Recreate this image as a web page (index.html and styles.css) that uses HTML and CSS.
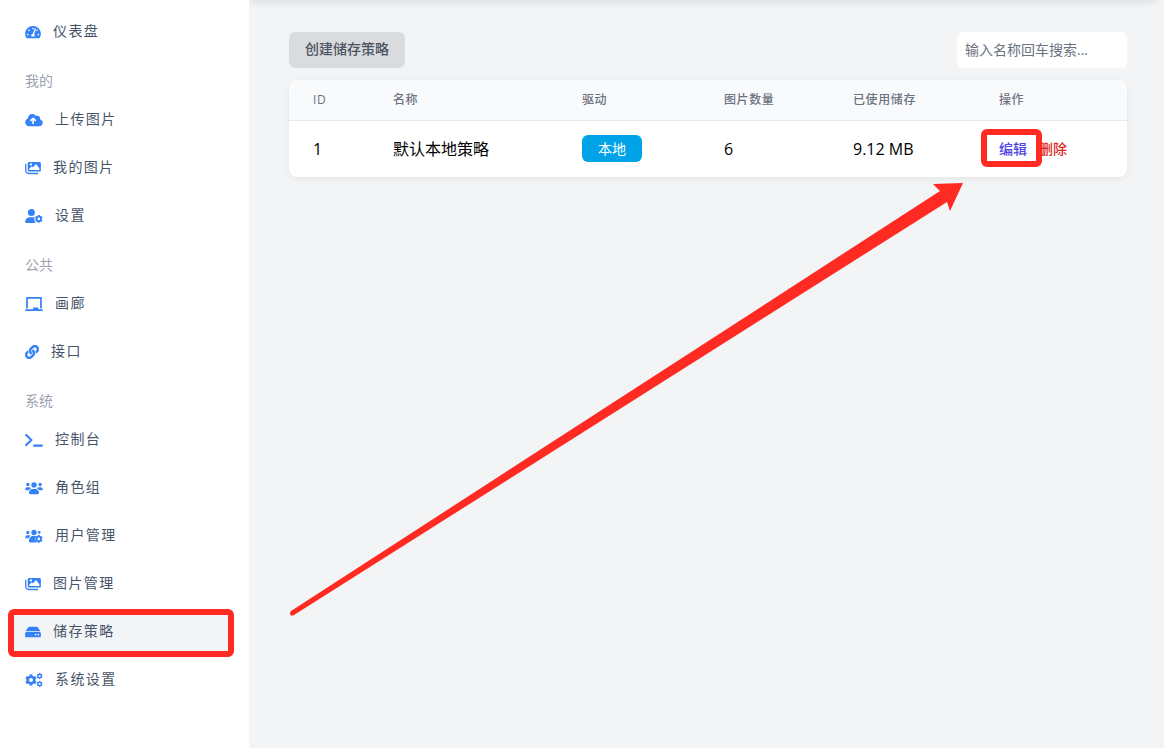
FILE: index.html
```html
<!DOCTYPE html>
<html lang="zh-CN">
<head>
  <meta charset="UTF-8">
  <meta name="viewport" content="width=device-width, initial-scale=1">
  <title>储存策略</title>
  <link rel="stylesheet" href="styles.css">
</head>
<body>
  <svg class="sprite" aria-hidden="true">
    <symbol id="i-gauge" viewBox="0 0 576 512"><path d="M288 32C128.94 32 0 160.94 0 320c0 52.8 14.25 102.26 39.06 144.8 5.61 9.62 16.3 15.2 27.44 15.2h443c11.14 0 21.83-5.58 27.44-15.2C561.75 422.26 576 372.8 576 320c0-159.06-128.94-288-288-288zm0 64c14.71 0 26.58 10.13 30.32 23.65-1.11 2.26-2.64 4.23-3.45 6.67l-9.22 27.67c-5.13 3.49-10.97 6.01-17.64 6.01-17.67 0-32-14.33-32-32S270.33 96 288 96zM96 384c-17.67 0-32-14.33-32-32s14.33-32 32-32 32 14.33 32 32-14.33 32-32 32zm48-160c-17.67 0-32-14.33-32-32s14.33-32 32-32 32 14.33 32 32-14.33 32-32 32zm246.77-72.41l-61.33 184C343.13 347.33 352 364.54 352 384c0 11.72-3.38 22.55-8.88 32H232.88c-5.5-9.45-8.88-20.28-8.88-32 0-33.94 26.5-61.43 59.9-63.59l61.34-184.01c4.17-12.56 17.73-19.45 30.36-15.17 12.57 4.19 19.35 17.79 15.17 30.36zm14.66 57.2l15.52-46.55c3.47-1.29 7.13-2.23 11.05-2.23 17.67 0 32 14.33 32 32s-14.33 32-32 32c-11.38-.01-20.89-6.28-26.57-15.22zM480 384c-17.67 0-32-14.33-32-32s14.33-32 32-32 32 14.33 32 32-14.33 32-32 32z"/></symbol>
    <symbol id="i-cloud" viewBox="0 0 640 512">
      <path d="M537.6 226.6c4.1-10.7 6.4-22.4 6.4-34.6 0-53-43-96-96-96-19.7 0-38.1 6-53.3 16.2C367 64.2 315.3 32 256 32c-88.4 0-160 71.6-160 160 0 2.7.1 5.4.2 8.1C40.2 219.8 0 273.2 0 336c0 79.5 64.5 144 144 144h368c70.7 0 128-57.3 128-128 0-61.9-44-113.6-102.4-125.4z"/>
      <path d="M288 384V208M208 272l80-80 80 80" fill="none" stroke="#fff" stroke-width="60" stroke-linecap="round" stroke-linejoin="round"/>
    </symbol>
    <symbol id="i-images" viewBox="0 0 576 512">
      <path fill-rule="evenodd" d="M528 32H144c-26.500 0-48 21.500-48 48v256c0 26.500 21.500 48 48 48H528c26.500 0 48-21.500 48-48v-256C576 53.500 554.500 32 528 32zM212 82a42 42 0 1 0 0 84 42 42 0 0 0 0-84zM520 325H152v-44l90-90 50 50 100-130 128 150z"/>
      <path d="M456 432H120c-39.700 0-72-32.300-72-72v-240C48 106.800 37.250 96 24 96S0 106.800 0 120v240C0 426.200 53.830 480 120 480h336c13.250 0 24-10.750 24-24S469.300 432 456 432z"/>
    </symbol>
    <symbol id="i-gear" viewBox="-8 -8 16 16"><g fill="none" stroke="currentColor"><circle r="4.500" stroke-width="3.600"/><path stroke-width="4" d="M0-5v-3M0 5v3M4.300 2.500l2.600 1.500M4.300-2.500l2.600-1.500M-4.300 2.500l-2.600 1.500M-4.300-2.500l-2.600-1.500"/></g></symbol>
    <symbol id="i-user-gear" viewBox="0 0 640 512">
      <circle cx="224" cy="128" r="128"/>
      <path d="M174 304h100c28 0 52 6 76 18-34 62-22 138 34 190H32c-18 0-32-14-32-32C0 380 78 304 174 304z"/>
      <use href="#i-gear" x="352" y="214" width="288" height="298"/>
    </symbol>
    <symbol id="i-board" viewBox="0 0 640 512"><path d="M96 64h448v352h64V40c0-22-18-40-40-40H72C50 0 32 18 32 40v376h64V64zM624 448H480v-64H288v64H16c-9 0-16 7-16 16v32c0 9 7 16 16 16h608c9 0 16-7 16-16v-32c0-9-7-16-16-16z"/></symbol>
    <symbol id="i-link" viewBox="0 0 512 512"><path d="M326.612 185.391c59.747 59.809 58.927 155.698.36 214.590-.11.12-.24.25-.36.37l-67.200 67.200c-59.270 59.270-155.699 59.262-214.960 0-59.270-59.260-59.270-155.700 0-214.960l37.106-37.106c9.840-9.840 26.786-3.300 27.294 10.606.648 17.722 3.826 35.527 9.690 52.721 1.986 5.822.567 12.262-3.783 16.612l-13.087 13.087c-28.026 28.026-28.905 73.660-1.155 101.960 28.024 28.579 74.086 28.749 102.325.51l67.200-67.190c28.191-28.191 28.073-73.757 0-101.830-3.701-3.694-7.429-6.564-10.341-8.569a16.037 16.037 0 0 1-6.947-12.606c-.396-10.567 3.348-21.456 11.698-29.806l21.054-21.055c5.521-5.521 14.182-6.199 20.584-1.731a152.482 152.482 0 0 1 20.522 17.197zM467.547 44.449c-59.261-59.262-155.690-59.270-214.960 0l-67.200 67.200c-.12.12-.25.25-.36.37-58.566 58.892-59.387 154.781.36 214.590a152.454 152.454 0 0 0 20.521 17.196c6.402 4.468 15.064 3.789 20.584-1.731l21.054-21.055c8.350-8.350 12.094-19.239 11.698-29.806a16.037 16.037 0 0 0-6.947-12.606c-2.912-2.005-6.640-4.875-10.341-8.569-28.073-28.073-28.191-73.639 0-101.830l67.200-67.190c28.239-28.239 74.300-28.069 102.325.51 27.750 28.300 26.872 73.934-1.155 101.960l-13.087 13.087c-4.350 4.350-5.769 10.790-3.783 16.612 5.864 17.194 9.042 34.999 9.690 52.721.509 13.906 17.454 20.446 27.294 10.606l37.106-37.106c59.271-59.259 59.271-155.699.001-214.959z" stroke="currentColor" stroke-width="14"/></symbol>
    <symbol id="i-terminal" viewBox="0 0 640 512"><path d="M34 72l190 184L34 440M320 464h286" fill="none" stroke="currentColor" stroke-width="80" stroke-linecap="round" stroke-linejoin="round"/></symbol>
    <symbol id="i-users" viewBox="0 0 640 512">
      <circle cx="320" cy="144" r="98"/><circle cx="96" cy="128" r="62"/><circle cx="544" cy="128" r="62"/>
      <path d="M270 288h100c72 0 134 62 134 140 0 30-16 52-42 52H178c-26 0-42-22-42-52 0-78 62-140 134-140zM68 224h70c24 0 44 10 58 24 2 8 8 16 14 24-40 12-68 36-86 64H22c-12 0-22-10-22-24 0-52 32-88 68-88zM572 224h-70c-24 0-44 10-58 24-2 8-8 16-14 24 40 12 68 36 86 64h102c12 0 22-10 22-24 0-52-32-88-68-88z"/>
    </symbol>
    <symbol id="i-users-gear" viewBox="0 0 640 512">
      <circle cx="320" cy="128" r="98"/><circle cx="96" cy="128" r="60"/><circle cx="510" cy="124" r="50"/>
      <path d="M270 256h70c24 0 38 6 54 16-54 66-30 174 42 224H178c-26 0-42-22-42-52 0-100 62-188 134-188zM68 224h70c24 0 44 10 58 24-40 26-60 56-72 88H22c-12 0-22-10-22-24 0-52 32-88 68-88z"/>
      <use href="#i-gear" x="352" y="214" width="288" height="298"/>
    </symbol>
    <symbol id="i-drive" viewBox="0 0 576 512"><path d="M576 304v96c0 26.510-21.490 48-48 48H48c-26.510 0-48-21.490-48-48v-96c0-26.510 21.490-48 48-48h480c26.510 0 48 21.490 48 48zm-48-80a79.557 79.557 0 0 1 30.777 6.165L462.250 85.374A48.003 48.003 0 0 0 422.311 64H153.689a48 48 0 0 0-39.938 21.374L17.223 230.165A79.557 79.557 0 0 1 48 224h480zm-48 96c-17.673 0-32 14.327-32 32s14.327 32 32 32 32-14.327 32-32-14.327-32-32-32zm-96 0c-17.673 0-32 14.327-32 32s14.327 32 32 32 32-14.327 32-32-14.327-32-32-32z"/></symbol>
    <symbol id="i-gears" viewBox="0 0 640 512">
      <use href="#i-gear" x="0" y="48" width="420" height="420"/>
      <use href="#i-gear" x="414" y="0" width="226" height="226"/>
      <use href="#i-gear" x="414" y="286" width="226" height="226"/>
    </symbol>
  </svg>

  <aside class="sidebar">
    <nav>
      <a class="nav-item" href="#"><svg class="icon"><use href="#i-gauge"/></svg><span>仪表盘</span></a>

      <p class="nav-title">我的</p>
      <a class="nav-item" href="#"><svg class="icon icon-lg"><use href="#i-cloud"/></svg><span>上传图片</span></a>
      <a class="nav-item" href="#"><svg class="icon"><use href="#i-images"/></svg><span>我的图片</span></a>
      <a class="nav-item" href="#"><svg class="icon icon-lg"><use href="#i-user-gear"/></svg><span>设置</span></a>

      <p class="nav-title">公共</p>
      <a class="nav-item" href="#"><svg class="icon icon-lg"><use href="#i-board"/></svg><span>画廊</span></a>
      <a class="nav-item" href="#"><svg class="icon icon-sm"><use href="#i-link"/></svg><span>接口</span></a>

      <p class="nav-title">系统</p>
      <a class="nav-item" href="#"><svg class="icon icon-lg"><use href="#i-terminal"/></svg><span>控制台</span></a>
      <a class="nav-item" href="#"><svg class="icon icon-lg"><use href="#i-users"/></svg><span>角色组</span></a>
      <a class="nav-item" href="#"><svg class="icon icon-lg"><use href="#i-users-gear"/></svg><span>用户管理</span></a>
      <a class="nav-item" href="#"><svg class="icon"><use href="#i-images"/></svg><span>图片管理</span></a>
      <a class="nav-item active" href="#"><svg class="icon"><use href="#i-drive"/></svg><span>储存策略</span></a>
      <a class="nav-item" href="#"><svg class="icon icon-lg"><use href="#i-gears"/></svg><span>系统设置</span></a>
    </nav>
  </aside>

  <main class="main">
    <div class="topbar"></div>
    <div class="content">
      <div class="toolbar">
        <button class="btn" type="button">创建储存策略</button>
        <input class="search" type="text" placeholder="输入名称回车搜索..." aria-label="搜索">
      </div>
      <div class="card">
        <table>
          <colgroup>
            <col class="col-id"><col class="col-name"><col class="col-driver"><col class="col-count"><col class="col-used"><col class="col-action">
          </colgroup>
          <thead>
            <tr><th>ID</th><th>名称</th><th>驱动</th><th>图片数量</th><th>已使用储存</th><th>操作</th></tr>
          </thead>
          <tbody>
            <tr>
              <td>1</td>
              <td>默认本地策略</td>
              <td><span class="badge">本地</span></td>
              <td>6</td>
              <td>9.12 MB</td>
              <td><div class="actions"><a class="edit" href="#">编辑</a><a class="delete" href="#">删除</a></div></td>
            </tr>
          </tbody>
        </table>
      </div>
    </div>
    <!-- arrow pointing to the edit link -->
    <svg class="arrow" width="674" height="434" viewBox="290 182 674 434" aria-hidden="true">
      <path d="M291 611L940 191L933 184L963 183L950 211L947 202L294 615Q291 617 290 614Q290 612 291 611z"/>
    </svg>
  </main>
</body>
</html>
```

FILE: styles.css
```css
* { box-sizing: border-box; }
body { margin: 0; min-height: 100vh; display: flex; background: #f3f4f6; color: #000; font: 16px/24px "Open Sans", "Noto Sans CJK SC", sans-serif; }
a { text-decoration: none; }
.sprite { display: none; }

/* sidebar */
.sidebar { width: 249px; flex-shrink: 0; padding: 11px 19px 40px 12px; background: #fff; }
.nav-title { margin: 20px 13px 8px; font-size: 14px; line-height: 20px; color: #9ca3af; }
.nav-item { position: relative; display: flex; align-items: center; gap: 12px; height: 40px; padding: 0 13px; border-radius: 4px; font-size: 14px; line-height: 20px; letter-spacing: 0.1em; color: #475569; }
.nav-item + .nav-item { margin-top: 8px; }
.nav-item.active { background: #f3f4f6; }
.icon { width: 16px; height: 14px; margin-top: 2px; flex-shrink: 0; fill: currentColor; color: #3582f6; }
.icon-lg { width: 18px; }
.icon-sm { width: 14px; }

/* main */
.main { position: relative; flex: 1; min-width: 0; overflow: hidden; }
.topbar { height: 56px; margin: -56px 8px 0 0; box-shadow: 0 2px 8px rgba(0, 0, 0, 0.1); }
.content { padding: 32px 37px 32px 40px; }
.toolbar { display: flex; justify-content: space-between; margin-bottom: 12px; }
.btn, .search { height: 36px; border: 0; border-radius: 6px; font-family: inherit; font-size: 14px; line-height: 20px; }
.btn { padding: 0 16px 2px; background: #dadbdd; color: #4b5563; font-weight: 500; }
.search { width: 170px; padding: 0 8px 2px; background: #fff; }
.search::placeholder { color: #6b7280; opacity: 1; }

.card { border-radius: 8px; overflow: hidden; background: #fff; box-shadow: 0 2px 6px rgba(0, 0, 0, 0.06); }
table { width: 100%; table-layout: fixed; border-collapse: collapse; }
.col-id { width: 80px; }
.col-name { width: 189px; }
.col-driver { width: 142px; }
.col-count { width: 129px; }
.col-used { width: 146px; }
.col-action { width: 152px; }
th { height: 40px; padding: 0 24px; background: #f9fafb; border-bottom: 1px solid #e5e7eb; text-align: left; font-weight: 500; font-size: 12px; line-height: 16px; letter-spacing: 0.05em; color: #6b7280; white-space: nowrap; }
td { height: 57px; padding: 0 24px; white-space: nowrap; }
.badge { display: block; width: max-content; padding: 4px 16px; border-radius: 6px; background: #00a3e8; color: #fff; font-size: 14px; line-height: 19px; }
.actions { display: flex; gap: 12px; font-size: 14px; line-height: 20px; font-weight: 500; }
.edit { position: relative; color: #4f46e5; }
.delete { color: #dc2626; }

/* red marks */
.active::after, .edit::after { content: ''; position: absolute; border: 6px solid #ff2a22; border-radius: 6px; }
.active::after { inset: -2px -4px -6px; }
.edit::after { inset: -10px -15px -8px -18px; z-index: 1; }
.arrow { position: absolute; left: 41px; top: 182px; fill: #ff2a22; pointer-events: none; }
```
